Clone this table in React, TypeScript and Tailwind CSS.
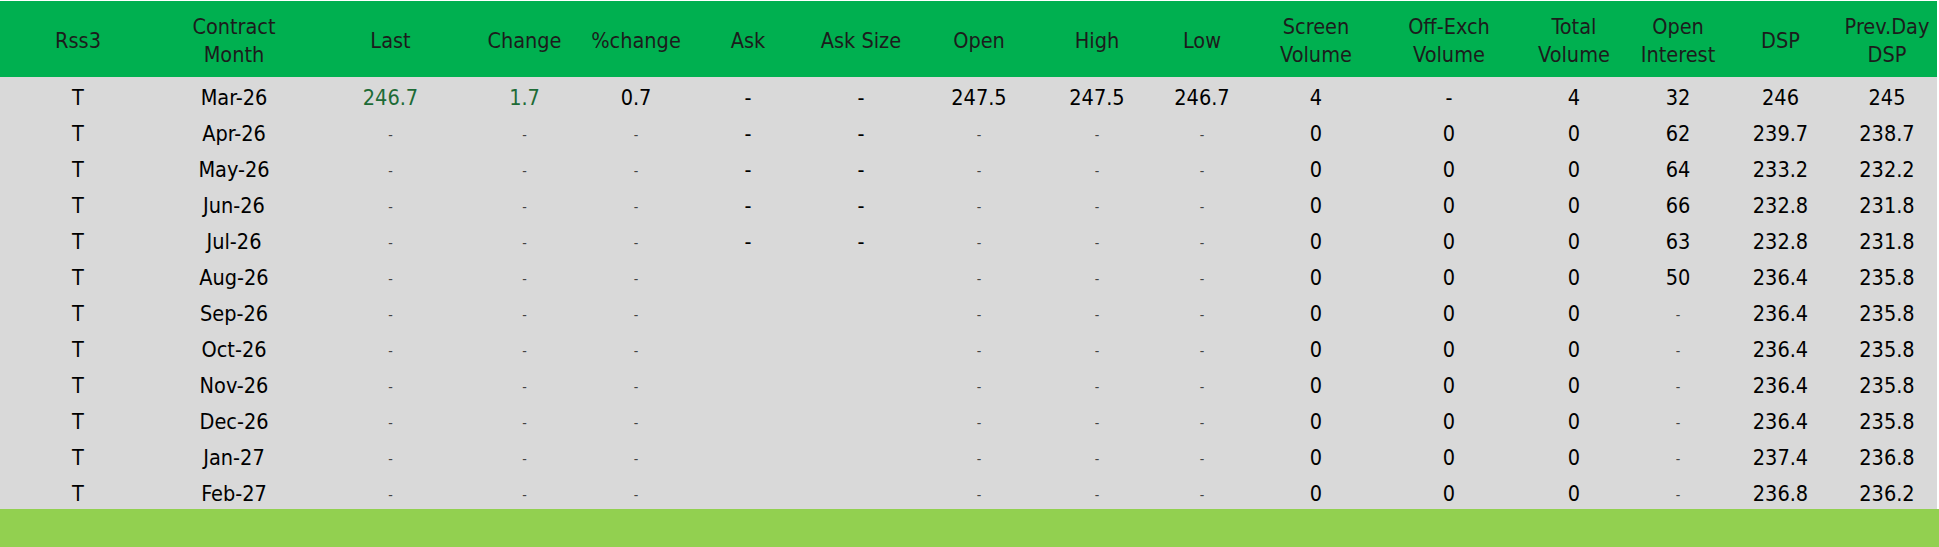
import React from 'react';

type Cell = string | { v: string; kind: 'green' | 'small' | 'dash' | 'empty' };

const COLS: { label: string[]; width: number }[] = [
  { label: ['Rss3'], width: 156 },
  { label: ['Contract', 'Month'], width: 156 },
  { label: ['Last'], width: 157 },
  { label: ['Change'], width: 111 },
  { label: ['%change'], width: 112 },
  { label: ['Ask'], width: 112 },
  { label: ['Ask Size'], width: 114 },
  { label: ['Open'], width: 122 },
  { label: ['High'], width: 114 },
  { label: ['Low'], width: 96 },
  { label: ['Screen', 'Volume'], width: 132 },
  { label: ['Off-Exch', 'Volume'], width: 134 },
  { label: ['Total', 'Volume'], width: 116 },
  { label: ['Open', 'Interest'], width: 92 },
  { label: ['DSP'], width: 113 },
  { label: ['Prev.Day', 'DSP'], width: 100 },
];

const sm = { v: '-', kind: 'small' as const };
const dash = { v: '-', kind: 'dash' as const };
const empty = { v: '', kind: 'empty' as const };

function quiet(month: string, oi: Cell, dsp: string, prev: string, ask: boolean): Cell[] {
  return [
    'T', month, sm, sm, sm,
    ask ? dash : empty, ask ? dash : empty,
    sm, sm, sm, '0', '0', '0', oi, dsp, prev,
  ];
}

const ROWS: Cell[][] = [
  ['T', 'Mar-26', { v: '246.7', kind: 'green' }, { v: '1.7', kind: 'green' }, '0.7', dash, dash,
    '247.5', '247.5', '246.7', '4', dash, '4', '32', '246', '245'],
  quiet('Apr-26', '62', '239.7', '238.7', true),
  quiet('May-26', '64', '233.2', '232.2', true),
  quiet('Jun-26', '66', '232.8', '231.8', true),
  quiet('Jul-26', '63', '232.8', '231.8', true),
  quiet('Aug-26', '50', '236.4', '235.8', false),
  quiet('Sep-26', sm, '236.4', '235.8', false),
  quiet('Oct-26', sm, '236.4', '235.8', false),
  quiet('Nov-26', sm, '236.4', '235.8', false),
  quiet('Dec-26', sm, '236.4', '235.8', false),
  quiet('Jan-27', sm, '237.4', '236.8', false),
  quiet('Feb-27', sm, '236.8', '236.2', false),
];

function renderCell(c: Cell) {
  if (typeof c === 'string') return c;
  if (c.kind === 'green') return <span className="text-[#1d6b36]">{c.v}</span>;
  if (c.kind === 'small') return <span className="inline-block align-middle leading-none text-[14px] text-[#444]">-</span>;
  if (c.kind === 'dash') return '-';
  return '';
}

export default function App() {
  return (
    <div
      className="w-[1939px] h-[547px] bg-white pt-px overflow-hidden"
      style={{ fontFamily: '"DejaVu Sans Condensed", "DejaVu Sans", sans-serif' }}
    >
      <table className="table-fixed border-collapse w-[1937px] text-[21.5px]">
        <colgroup>
          {COLS.map((c, i) => (
            <col key={i} style={{ width: c.width }} />
          ))}
        </colgroup>
        <thead>
          <tr className="h-[76px] bg-[#00b050] text-[#1c1c1c]">
            {COLS.map((c, i) => (
              <th key={i} className="font-normal text-center align-middle leading-[28px] p-0 pt-[4px] whitespace-nowrap">
                {c.label.map((l, j) => (
                  <div key={j}>{l}</div>
                ))}
              </th>
            ))}
          </tr>
        </thead>
        <tbody>
          {ROWS.map((r, i) => (
            <tr key={i} className="h-[36px] bg-[#d9d9d9] text-black">
              {r.map((c, j) => (
                <td key={j} className="h-[36px] text-center align-middle p-0 pt-[6px] leading-none whitespace-nowrap">
                  {renderCell(c)}
                </td>
              ))}
            </tr>
          ))}
        </tbody>
      </table>
      <div className="h-[38px] w-full bg-[#92d050]" />
    </div>
  );
}
